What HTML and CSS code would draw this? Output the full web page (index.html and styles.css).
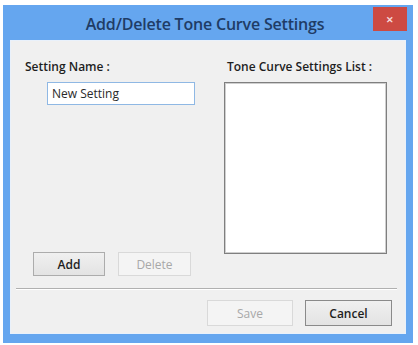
FILE: index.html
```html
<!DOCTYPE html>
<html lang="en">
<head>
    <meta charset="UTF-8">
    <title>Add/Delete Tone Curve Settings</title>
    <link rel="stylesheet" href="styles.css">
</head>
<body>
    <div class="window">
        <div class="titlebar">
            <span></span>
            <div class="title">Add/Delete Tone Curve Settings</div>
            <div class="close">&#x2715;</div>
        </div>
        <div class="client">
            <div class="main">
                <div class="left">
                    <div class="label">Setting Name :</div>
                    <input class="name-input" type="text" value="New Setting">
                    <div class="btn-row">
                        <button class="btn">Add</button>
                        <button class="btn disabled">Delete</button>
                    </div>
                </div>
                <div class="right">
                    <div class="label label-list">Tone Curve Settings List :</div>
                    <div class="listbox"></div>
                </div>
            </div>
            <div class="separator"></div>
            <div class="footer">
                <button class="btn btn-wide disabled">Save</button>
                <button class="btn btn-wide btn-default">Cancel</button>
            </div>
        </div>
    </div>
</body>
</html>
```

FILE: styles.css
```css
body {
    margin: 0;
    background: #fff;
    font-family: "Open Sans", "Noto Sans", sans-serif;
    width: 418px;
    height: 345px;
}
.window {
    margin: 5px 0 0 3px;
    width: 410px;
    height: 338px;
    background: #65a6ef;
    display: flex;
    flex-direction: column;
}
.titlebar {
    height: 36px;
    display: grid;
    grid-template-columns: 1fr auto 1fr;
    align-items: center;
    padding-right: 6px;
}
.title {
    font-size: 16px;
    font-weight: 600;
    color: #1f3c66;
    letter-spacing: -0.2px;
    padding-top: 1px;
}
.close {
    justify-self: end;
    align-self: start;
    margin-top: 2px;
    width: 34px;
    height: 24px;
    background: #cd4a42;
    color: #f6dada;
    font-size: 9px;
    font-weight: 700;
    display: flex;
    align-items: center;
    justify-content: center;
}
.client {
    margin: 0 8px;
    height: 292px;
    background: #f0f0f0;
    box-shadow: 0 0 0 1px #e9f1fb;
    display: flex;
    flex-direction: column;
}
.main {
    display: flex;
    padding: 18px 0 0 14px;
}
.left {
    width: 199px;
    display: flex;
    flex-direction: column;
}
.label {
    font-size: 12px;
    line-height: 16px;
    color: #1e1e1e;
    font-weight: 600;
}
.label-list {
    margin-left: 3px;
}
.name-input {
    margin: 7px 0 0 22px;
    width: 148px;
    height: 23px;
    box-sizing: border-box;
    border: 1px solid #8fb8e4;
    background: #fff;
    padding: 0 4px;
    font-family: inherit;
    font-size: 12px;
    color: #2a2a2a;
    outline: none;
}
.btn-row {
    display: flex;
    gap: 13px;
    margin: 147px 0 0 8px;
}
.btn {
    width: 72px;
    height: 24px;
    box-sizing: border-box;
    border: 1px solid #acacac;
    background: linear-gradient(#f0f0f0, #e3e3e3);
    font-family: inherit;
    font-size: 12px;
    font-weight: 600;
    color: #1e1e1e;
    padding: 0;
}
.btn.disabled {
    width: 73px;
    border-color: #d9d9d9;
    background: #f4f4f4;
    color: #a8a8a8;
    font-weight: 400;
}
.right {
    width: 163px;
}
.listbox {
    margin-top: 7px;
    height: 172px;
    box-sizing: border-box;
    border: 1px solid #7f7f7f;
    box-shadow: inset 0 0 0 1px #cfcfcf;
    background: #fff;
}
.separator {
    margin: 12px 8px 0 5px;
    border-top: 1px solid #b0b0b0;
    border-bottom: 1px solid #fff;
}
.footer {
    display: flex;
    justify-content: flex-end;
    gap: 12px;
    margin-top: 10px;
    padding-right: 13px;
}
.btn-wide {
    height: 26px;
}
.btn-wide.disabled {
    width: 86px;
}
.btn-default {
    width: 87px;
    border-color: #8a8a8a;
}
```
